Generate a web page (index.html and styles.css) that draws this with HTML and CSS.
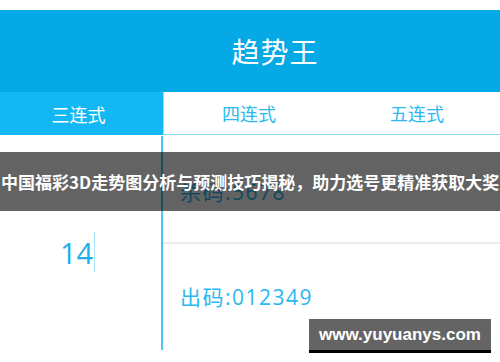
FILE: index.html
```html
<!DOCTYPE html>
<html lang="zh-CN">
<head>
  <meta charset="utf-8">
  <title>趋势王</title>
  <link rel="stylesheet" href="styles.css">
</head>
<body>
  <div class="page">
    <header class="title-bar">趋势王</header>

    <nav class="tabs">
      <div class="tab active">三连式</div>
      <div class="tab second">四连式</div>
      <div class="tab third">五连式</div>
    </nav>

    <div class="board">
      <div class="left-col">
        <span class="big-num">14</span><span class="cursor"></span>
      </div>
      <div class="right-col">
        <div class="row">杀码:5678</div>
        <div class="row">出码:012349</div>
      </div>
    </div>

    <!-- overlays -->
    <div class="banner">中国福彩3D走势图分析与预测技巧揭秘，助力选号更精准获取大奖</div>
    <div class="watermark">www.yuyuanys.com</div>
  </div>
</body>
</html>
```

FILE: styles.css
```css
body {
  margin: 0;
  background: #fff;
  font-family: "Open Sans", "Noto Sans CJK SC", sans-serif;
}
.page {
  position: relative;
  width: 500px;
  height: 362px;
  overflow: hidden;
  padding-top: 10px;
  box-sizing: border-box;
}
.title-bar {
  height: 82px;
  background-color: #05a9e6;
  color: #fff;
  font-family: "Noto Sans CJK SC", sans-serif;
  font-size: 28px;
  display: flex;
  align-items: center;
  justify-content: center;
  padding-left: 50px;
  letter-spacing: 1px;
}
.tabs {
  display: flex;
  height: 43px;
  font-family: "Noto Sans CJK SC", sans-serif;
  font-size: 18px;
}
.tab {
  display: flex;
  align-items: center;
  justify-content: center;
  color: #2cb9ef;
  background: #fff;
  border-bottom: 1px solid #8fdcf8;
  box-sizing: border-box;
}
.tab.active {
  width: 163px;
  background-color: #12b7f4;
  color: #fff;
  padding-right: 6px;
  border-bottom: none;
}
.tab.second {
  width: 171px;
  border-left: 1px solid #8fdcf8;
}
.tab.third {
  flex: 1;
}
.board {
  display: flex;
  margin-top: 1px;
  height: 214px;
}
.left-col {
  width: 163px;
  border-right: 2px solid #4cc7f4;
  display: flex;
  align-items: center;
  justify-content: center;
  padding-top: 18px;
  padding-right: 6px;
  box-sizing: border-box;
}
.big-num {
  font-size: 29px;
  color: #1aaeea;
  line-height: 1;
}
.cursor {
  width: 1px;
  height: 40px;
  background: #a8e2f8;
  margin-left: 1px;
}
.right-col {
  flex: 1;
  display: flex;
  flex-direction: column;
}
.row {
  height: 106px;
  display: flex;
  align-items: center;
  padding-left: 17px;
  padding-top: 4px;
  box-sizing: border-box;
  color: #2ab8f0;
  font-size: 21px;
  letter-spacing: 1.5px;
}
.row + .row {
  border-top: 2px solid #ebebeb;
  padding-top: 0;
}
.banner {
  position: absolute;
  left: 0;
  top: 152px;
  width: 500px;
  height: 59px;
  background: rgba(0, 0, 0, 0.61);
  color: #fff;
  font-family: "Noto Sans CJK SC", sans-serif;
  font-weight: bold;
  font-size: 17px;
  display: flex;
  align-items: center;
  padding-left: 1px;
  white-space: nowrap;
  box-sizing: border-box;
}
.watermark {
  position: absolute;
  left: 309px;
  top: 319px;
  width: 182px;
  height: 31px;
  background: #646464;
  border-bottom: 3px solid #000;
  color: #fff;
  font-family: "Liberation Sans", Arial, sans-serif;
  font-weight: bold;
  font-size: 17px;
  display: flex;
  align-items: center;
  justify-content: center;
}
```
